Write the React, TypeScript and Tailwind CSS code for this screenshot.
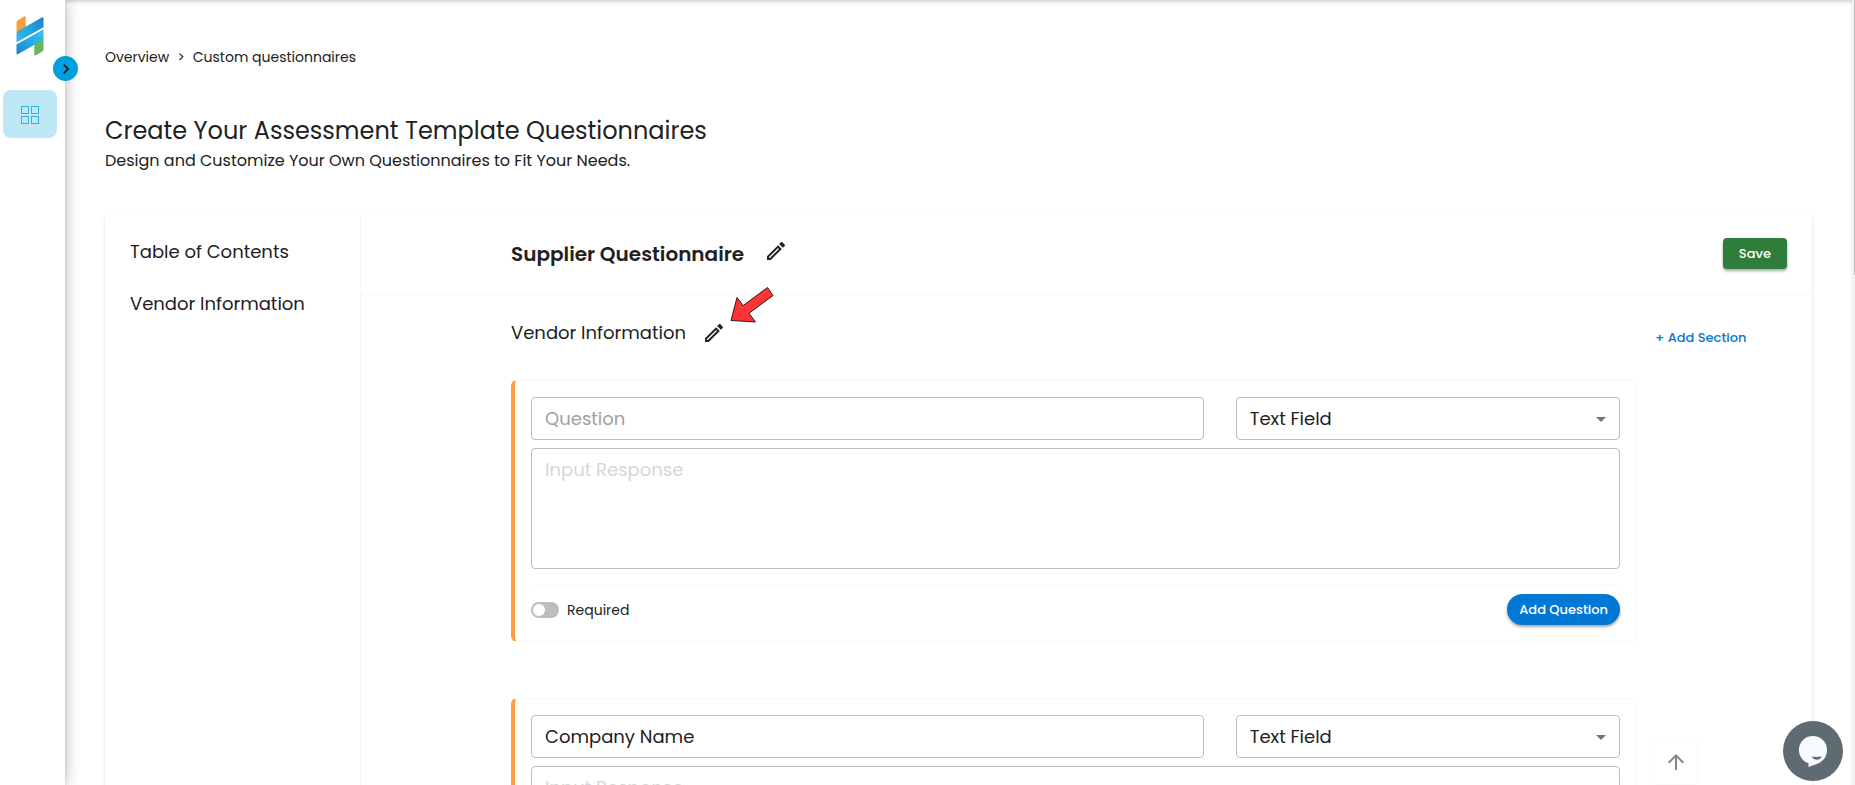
import { useState } from "react";
import { MdArrowDropDown, MdArrowUpward, MdChevronRight, MdOutlineEdit } from "react-icons/md";

const sections = ["Vendor Information"];

const fieldTypes = ["Text Field", "Multiple Choice", "Checkbox", "File Upload"];

const questions = [
  { id: "new", value: "", action: "Add Question" },
  { id: "company-name", value: "Company Name", action: "Delete" },
];

function Logo() {
  return (
    <svg viewBox="0 0 28 40" className="w-7 h-10" aria-hidden="true">
      <defs>
        <linearGradient id="bandTop" x1="0" y1="1" x2="1" y2="0">
          <stop offset="0" stopColor="#3cbcf0" />
          <stop offset="0.5" stopColor="#22a6dd" />
          <stop offset="1" stopColor="#1c7fd0" />
        </linearGradient>
        <linearGradient id="bandBottom" x1="0" y1="1" x2="1" y2="0">
          <stop offset="0" stopColor="#1c7fd0" />
          <stop offset="0.5" stopColor="#29a9e2" />
          <stop offset="1" stopColor="#3cc0f2" />
        </linearGradient>
      </defs>
      <path d="M.5 6.6Q.5 5 2 4.200L8 .5Q9.700-.3 9.700 1.500V13L.5 17z" fill="#fb9d3c" />
      <path d="M18.300 27 27.500 22V33.500Q27.500 35 26 35.800L20 39.300Q18.300 40 18.300 38.400z" fill="#68b75c" />
      <path d="M.5 17.200Q.5 15.800 2 15L25.800 1.500Q27.500.7 27.500 2.300V11.300L.5 26.500z" fill="url(#bandTop)" />
      <path d="M.5 28.400 27.500 13.200V22.300Q27.500 23.700 26 24.500L2.200 38.100Q.5 39 .5 37.300z" fill="url(#bandBottom)" />
    </svg>
  );
}

function Sidebar() {
  return (
    <aside className="relative z-10 w-[65px] shrink-0 bg-white shadow-[0_0_14px_rgba(0,0,0,0.3)]">
      <div className="flex justify-center pt-4 pr-[5px]">
        <Logo />
      </div>
      <button
        aria-label="Expand menu"
        className="absolute top-14 -right-[13px] w-[25px] h-[25px] rounded-full bg-[#00a0dc] text-gray-900 flex items-center justify-center"
      >
        <MdChevronRight className="w-5 h-5" />
      </button>
      <nav className="mt-[34px] px-[3px]">
        <a
          href="#overview"
          aria-label="Overview"
          className="flex items-center justify-center w-[54px] h-12 pt-0.5 rounded-lg bg-[#bfe7f6]"
        >
          <svg viewBox="0 0 18 18" className="w-[18px] h-[18px]" fill="none" stroke="#2db5e0">
            <rect x="0.5" y="0.5" width="7" height="7" />
            <rect x="10.5" y="0.5" width="7" height="7" />
            <rect x="0.5" y="10.5" width="7" height="7" />
            <rect x="10.5" y="10.5" width="7" height="7" />
          </svg>
        </a>
      </nav>
    </aside>
  );
}

function QuestionCard({ id, value, action }: { id: string; value: string; action: string }) {
  const [text, setText] = useState(value);
  const [required, setRequired] = useState(false);

  return (
    <div className="rounded-md border border-[#f7f7f7] border-l-4 border-l-[#fc9f40] p-4">
      <div className="grid grid-cols-[7fr_4fr] gap-8">
        <input
          type="text"
          aria-label="Question"
          placeholder="Question"
          value={text}
          onChange={(e) => setText(e.target.value)}
          className="w-full h-[43px] rounded border border-[#bdbdbd] px-[13px] text-lg placeholder:text-[#a0a0a0]"
        />
        <div className="relative">
          <select
            aria-label="Field type"
            className="w-full h-[43px] appearance-none rounded border border-[#bdbdbd] bg-white px-[13px] text-lg"
          >
            {fieldTypes.map((type) => (
              <option key={type}>{type}</option>
            ))}
          </select>
          <MdArrowDropDown className="pointer-events-none absolute right-[7px] top-[10px] w-6 h-6 text-[#757575]" />
        </div>
      </div>
      <textarea
        aria-label="Input Response"
        placeholder="Input Response"
        className="block w-full h-[121px] mt-2 resize-none rounded border border-[#bdbdbd] px-[13px] py-[9px] text-lg leading-6 placeholder:text-[#d6d6d6]"
      />
      <div className="mt-4 pt-2 flex items-center justify-between border-t border-[#f7f7f7]">
        <label htmlFor={`${id}-required`} className="flex items-center gap-2 text-sm cursor-pointer">
          <input
            id={`${id}-required`}
            type="checkbox"
            role="switch"
            checked={required}
            onChange={() => setRequired(!required)}
            className="appearance-none w-7 h-4 rounded-full bg-[#bdbdbd] checked:bg-[#0277d4] before:block before:w-3 before:h-3 before:m-0.5 before:rounded-full before:bg-white checked:before:ml-3.5"
          />
          Required
        </label>
        <button className="h-[31px] rounded-full bg-[#0277d4] px-3 text-[13px] font-medium text-white shadow-[0_2px_3px_rgba(0,0,0,0.35)]">
          {action}
        </button>
      </div>
    </div>
  );
}

function RedArrow() {
  return (
    <svg viewBox="0 0 44 38" className="absolute left-7 -top-[35px] w-11 h-[38px]" aria-hidden="true">
      <path
        d="M1 34.500 7 11.500 13.200 19.500 37.500 1.500 43 9.500 19 27.300 25.500 36z"
        fill="#ff3333"
        stroke="#222"
        strokeWidth="1"
        strokeLinejoin="round"
      />
    </svg>
  );
}

export default function App() {
  return (
    <div className="flex h-screen overflow-hidden bg-white font-[Poppins,Inter,sans-serif] text-[#212121]">
      <Sidebar />

      <main className="flex-1 min-w-0 overflow-y-auto [scrollbar-width:none] pl-10 pr-10 shadow-[inset_0_3px_4px_-2px_rgba(0,0,0,0.25)]">
        <nav aria-label="Breadcrumb" className="pt-[47px] flex items-center gap-2 text-sm leading-5">
          <a href="#overview">Overview</a>
          <span>&gt;</span>
          <a href="#questionnaires">Custom questionnaires</a>
        </nav>

        <h1 className="mt-12 text-2xl leading-8">Create Your Assessment Template Questionnaires</h1>
        <p className="mt-0.5 text-base leading-6">Design and Customize Your Own Questionnaires to Fit Your Needs.</p>

        <div className="mt-10 mb-10 flex rounded-md shadow-[0_1px_3px_rgba(0,0,0,0.15)]">
          <div className="w-[15%] shrink-0 border-r border-[#f7f7f7] px-[25px] pt-[25px] text-lg leading-7">
            <h2>Table of Contents</h2>
            <ul className="mt-6">
              {sections.map((section) => (
                <li key={section}>
                  <a href="#vendor-information">{section}</a>
                </li>
              ))}
            </ul>
          </div>

          <div className="flex-1 min-w-0">
            <div className="flex items-center h-[82px] border-b border-[#f7f7f7] pr-[25px]">
              <div className="w-[150px] shrink-0" />
              <h2 className="flex-1 flex items-center text-xl font-semibold">
                Supplier Questionnaire
                <button aria-label="Edit title" className="ml-5 -mt-1.5">
                  <MdOutlineEdit className="w-6 h-6" />
                </button>
              </h2>
              <button className="h-[31px] rounded bg-[#2e7d3b] px-4 text-[13px] font-medium text-white shadow-[0_2px_3px_rgba(0,0,0,0.35)]">
                Save
              </button>
            </div>

            <div id="vendor-information" className="flex">
              <div className="w-[150px] shrink-0" />
              <div className="flex-1 min-w-0">
                <h3 className="flex items-center pt-6 text-lg leading-7">
                  Vendor Information
                  <span className="relative ml-4 flex">
                    <button aria-label="Edit section">
                      <MdOutlineEdit className="w-6 h-6" />
                    </button>
                    <RedArrow />
                  </span>
                </h3>
                <div className="mt-[33px] flex flex-col gap-14 pb-10">
                  {questions.map((q) => (
                    <QuestionCard key={q.id} {...q} />
                  ))}
                </div>
              </div>
              <div className="w-[175px] shrink-0 pl-[18px] pt-[30px]">
                <button className="text-[13px] leading-5 font-medium text-[#0277d4]">+ Add Section</button>
              </div>
            </div>
          </div>
        </div>
      </main>

      <div className="w-[3px] shrink-0 bg-[#f1f1f1] flex justify-end">
        <div className="w-px h-[35%] bg-[#c1c1c1]" />
      </div>

      <button
        aria-label="Scroll to top"
        className="fixed right-[157px] bottom-0 w-[45px] h-[46px] rounded border border-[#f9f9f9] bg-white flex items-center justify-center text-[#858585]"
      >
        <MdArrowUpward className="w-6 h-6" />
      </button>
      <button
        aria-label="Open chat"
        className="fixed z-10 right-3 bottom-1 w-[60px] h-[60px] rounded-full bg-[#5f6b72] flex items-center justify-center"
      >
        <svg viewBox="0 0 28 31" className="w-7 h-[31px]">
          <path d="M14 0a14 14 0 0 1 14 14c0 7-4 11-9 13.500L9.500 31V27.300A14 14 0 0 1 14 0z" fill="#f7fbff" />
          <path d="M12.800 20.500c3 .7 7 .7 10-.2-.7 2.300-2.300 3.500-4.700 3.500-2.500 0-4.400-1.100-5.300-3.300z" fill="#5f6b72" />
        </svg>
      </button>
    </div>
  );
}
